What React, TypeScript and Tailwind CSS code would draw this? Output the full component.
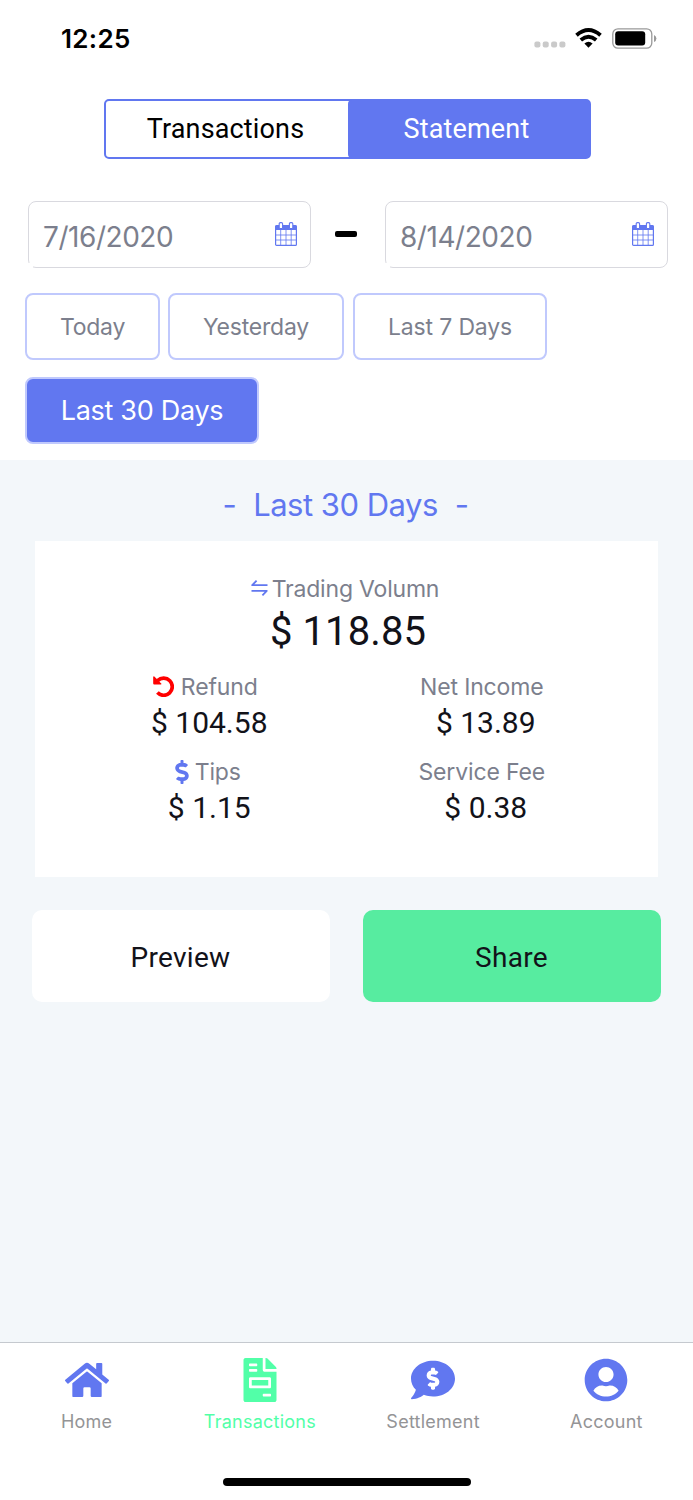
import React from 'react';
import { FaCommentDollar, FaDollarSign, FaFileInvoice, FaHome, FaUserCircle } from 'react-icons/fa';
import clsx from 'clsx';

const inter = "font-['Inter',sans-serif]";
const roboto = "font-['Roboto',sans-serif]";

const CalendarIcon = () => (
  <svg className="mb-0.5 h-6 w-[22px]" viewBox="0 0 22 24" fill="none">
    <rect x="0.6" y="3.6" width="20.8" height="19.8" rx="1" stroke="#6177f0" strokeWidth="1.2" />
    <path d="M0.5 3.5h21v4.5h-21z" fill="#6177f0" />
    <path d="M5.7 8v15M11 8v15M16.2 8v15M1 13h20M1 18h20" stroke="#6177f0" strokeWidth="0.8" />
    <rect x="4.2" y="0.6" width="3.4" height="6" rx="1.2" fill="#fff" stroke="#6177f0" strokeWidth="1.1" />
    <rect x="14.4" y="0.6" width="3.4" height="6" rx="1.2" fill="#fff" stroke="#6177f0" strokeWidth="1.1" />
  </svg>
);

const SwapIcon = () => (
  <svg className="mb-0.5 h-4 w-[17px]" viewBox="0 0 17 16" fill="none" stroke="#6177f0" strokeWidth="1.8">
    <path d="M16.5 5.2H1.2L5.6 0.7" strokeLinejoin="round" />
    <path d="M0.5 10.8H15.8L11.4 15.3" strokeLinejoin="round" />
  </svg>
);

const RefundIcon = () => (
  <svg className="mr-[7px] mb-px size-[21px]" viewBox="0 0 21 21" fill="none">
    <path d="M4.6 4.6A8.6 8.6 0 1 1 4.4 16.6" stroke="#ff0000" strokeWidth="3.7" />
    <path d="M0.2 0.9V7.4q0 1 1 1h6.6q1.2-0.1 0.4-1L1.6 0.7Q0.5-0.1 0.2 0.9z" fill="#ff0000" />
  </svg>
);

const StatusBar = () => (
  <div className="flex h-[76px] items-center justify-between pr-9 pl-[61px]">
    <span className={clsx(inter, 'pt-px text-[26px] leading-8 font-semibold tracking-[0.3px]')}>12:25</span>
    <div className="flex items-center">
      <svg className="mt-3 h-[7px] w-8" viewBox="0 0 32 7" fill="#cacaca">
        <rect x="0.4" y="0.5" width="6" height="6" rx="2" />
        <rect x="8.7" y="0.5" width="6" height="6" rx="2" />
        <rect x="17.1" y="0.5" width="6" height="6" rx="2" />
        <rect x="25.4" y="0.5" width="6" height="6" rx="2" />
      </svg>
      <svg className="ml-[9px] h-5 w-[27px]" viewBox="0 0 27 20" fill="none" stroke="#000" strokeWidth="3.9">
        <path d="M1.5 7.2Q13.5 -3 25.5 7.2" />
        <path d="M5.8 11.9Q13.5 5.6 21.2 11.9" />
        <path d="M9.4 15.6Q13.5 12 17.6 15.6L13.5 19.7z" fill="#000" stroke="none" />
      </svg>
      <svg className="ml-[10px] h-[21px] w-[45px]" viewBox="0 0 45 21">
        <rect x="0.8" y="0.8" width="39" height="19.4" rx="5.2" fill="none" stroke="#999" strokeWidth="1.3" />
        <rect x="3.2" y="3.2" width="30" height="14.4" rx="3" />
        <path d="M42 7v7q2.4-1 2.4-3.5T42 7z" fill="#999" />
      </svg>
    </div>
  </div>
);

const DateField = ({ value }: { value: string }) => (
  <div className="relative flex h-[67px] w-[283px] items-center justify-between rounded-lg border border-[#d9d9df] pr-[13px] pl-[14px]">
    <span className={clsx(inter, 'pt-1 text-[28px] tracking-[-0.45px] text-[#7c7f8d]')}>{value}</span>
    <CalendarIcon />
    <span className="absolute -bottom-px -left-px h-[5px] w-[5px] bg-white" />
  </div>
);

const ranges = [
  { label: 'Today', className: 'w-[135px] text-[23px] tracking-[-0.25px] text-[#7c7f8d]' },
  { label: 'Yesterday', className: 'w-[176px] text-[23px] tracking-[-0.2px] text-[#7c7f8d]' },
  { label: 'Last 7 Days', className: 'w-[194px] ml-px text-[23px] tracking-[-0.15px] text-[#7c7f8d]' },
  { label: 'Last 30 Days', className: 'w-[234px] bg-[#6177f0] text-[27px] tracking-[-0.3px] text-white' },
];

interface StatProps {
  label: string;
  value: string;
  icon?: React.ReactNode;
}

const Stat = ({ label, value, icon }: StatProps) => (
  <div className="flex flex-col items-center">
    <div className={clsx(inter, 'flex h-8 items-center text-[23px] tracking-[-0.15px] text-[#7c7f8d]', icon ? 'pr-[10px]' : 'pr-0.5')}>
      {icon}
      <span>{label}</span>
    </div>
    <div className={clsx(roboto, 'flex h-[39px] items-center text-[30px]', icon ? 'pr-0.5' : 'pl-1.5')}>{value}</div>
  </div>
);

const tabs = [
  { label: 'Home', Icon: FaHome },
  { label: 'Transactions', Icon: FaFileInvoice, active: true },
  { label: 'Settlement', Icon: FaCommentDollar },
  { label: 'Account', Icon: FaUserCircle },
];

const TabBar = () => (
  <nav className="flex h-[158px] flex-col items-center border-t border-[#c5c9cf] bg-white">
    <div className="grid h-[135px] w-full grid-cols-4 pt-[15px]">
      {tabs.map(({ label, Icon, active }) => (
        <div key={label} className="flex flex-col items-center">
          <Icon className={clsx('size-11', active ? 'text-[#52ffa8]' : 'text-[#6177f0]')} />
          <span
            className={clsx(
              inter,
              'mt-2 text-[18px] leading-6 tracking-[0.25px]',
              active ? 'text-[#52ffa8]' : 'text-[#949496]'
            )}
          >
            {label}
          </span>
        </div>
      ))}
    </div>
    <div className="h-2 w-[248px] rounded-full bg-black" />
  </nav>
);

export default function App() {
  return (
    <div className="flex h-[1500px] w-[693px] flex-col overflow-hidden bg-white text-[#121219]">
      <header className="h-[460px] text-black">
        <StatusBar />
        <div className={clsx(roboto, 'mt-[23px] ml-[104px] flex h-[60px] w-[487px] rounded-[5px] border-2 border-[#6177f0] text-[27px] tracking-[0.15px]')}>
          <div className="flex w-[242px] items-center justify-center pr-[3px]">Transactions</div>
          <div className="-my-px -mr-px flex flex-1 items-center justify-center rounded-[4px] bg-[#6177f0] pr-[5px] text-white">
            Statement
          </div>
        </div>
        <div className="mt-[42px] flex items-center justify-between pr-[25px] pl-7">
          <DateField value="7/16/2020" />
          <div className="mr-1 mb-0.5 h-1.5 w-[22px] rounded-[2px] bg-black" />
          <DateField value="8/14/2020" />
        </div>
        <div className={clsx(inter, 'mt-[25px] flex flex-wrap gap-x-2 gap-y-[17px] pl-[25px]')}>
          {ranges.map(({ label, className }) => (
            <button key={label} className={clsx('h-[67px] rounded-lg border-2 border-[#c0c9fd] pt-px', className)}>
              {label}
            </button>
          ))}
        </div>
      </header>

      <main className="flex-1 bg-[#f3f7fa]">
        <h1 className={clsx(inter, 'flex h-[81px] items-center justify-center gap-[17px] pt-2.5 pr-0.5 text-[31px] tracking-[-0.5px] text-[#6177f0]')}>
          <span>-</span>
          <span>Last 30 Days</span>
          <span>-</span>
        </h1>
        <section className="mx-[35px] h-[336px] bg-white pt-8">
          <div className={clsx(inter, 'flex h-8 items-center justify-center gap-1 pr-[3px] text-[23px] tracking-[-0.2px] text-[#7c7f8d]')}>
            <SwapIcon />
            <span>Trading Volumn</span>
          </div>
          <div className={clsx(roboto, 'flex h-[53px] items-center justify-center pl-[3px] text-[40px] tracking-[0.1px]')}>
            $ 118.85
          </div>
          <div className="mt-[13px] grid grid-cols-2 gap-y-[14px] px-[39px]">
            <Stat label="Refund" value="$ 104.58" icon={<RefundIcon />} />
            <Stat label="Net Income" value="$ 13.89" />
            <Stat label="Tips" value="$ 1.15" icon={<FaDollarSign className="mr-px size-6 text-[#6177f0]" />} />
            <Stat label="Service Fee" value="$ 0.38" />
          </div>
        </section>
        <div className={clsx(roboto, 'mt-[33px] flex gap-[33px] px-8 text-[28px] tracking-[0.3px]')}>
          <button className="h-[92px] flex-1 rounded-[10px] bg-white pt-[3px] pr-px">Preview</button>
          <button className="h-[92px] flex-1 rounded-[10px] bg-[#57eca0] pt-[3px] pr-px">Share</button>
        </div>
      </main>

      <TabBar />
    </div>
  );
}
